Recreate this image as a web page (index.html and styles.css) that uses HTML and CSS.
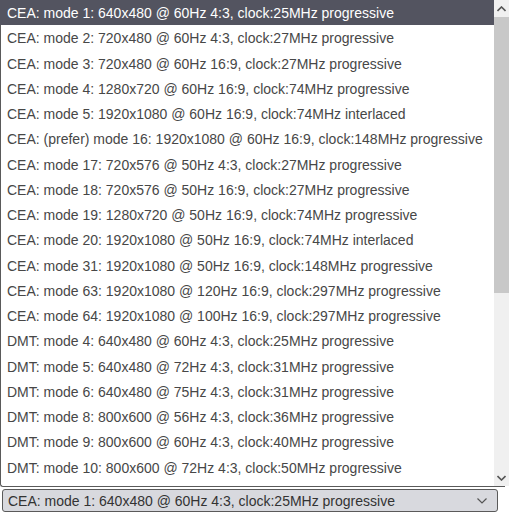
FILE: index.html
```html
<!DOCTYPE html>
<html>
<head>
<meta charset="utf-8">
<link rel="stylesheet" href="styles.css">
</head>
<body>
<div class="page">
  <div class="popup">
    <div class="options">
      <div class="opt selected">CEA: mode 1: 640x480 @ 60Hz 4:3, clock:25MHz progressive</div>
      <div class="opt">CEA: mode 2: 720x480 @ 60Hz 4:3, clock:27MHz progressive</div>
      <div class="opt">CEA: mode 3: 720x480 @ 60Hz 16:9, clock:27MHz progressive</div>
      <div class="opt">CEA: mode 4: 1280x720 @ 60Hz 16:9, clock:74MHz progressive</div>
      <div class="opt">CEA: mode 5: 1920x1080 @ 60Hz 16:9, clock:74MHz interlaced</div>
      <div class="opt">CEA: (prefer) mode 16: 1920x1080 @ 60Hz 16:9, clock:148MHz progressive</div>
      <div class="opt">CEA: mode 17: 720x576 @ 50Hz 4:3, clock:27MHz progressive</div>
      <div class="opt">CEA: mode 18: 720x576 @ 50Hz 16:9, clock:27MHz progressive</div>
      <div class="opt">CEA: mode 19: 1280x720 @ 50Hz 16:9, clock:74MHz progressive</div>
      <div class="opt">CEA: mode 20: 1920x1080 @ 50Hz 16:9, clock:74MHz interlaced</div>
      <div class="opt">CEA: mode 31: 1920x1080 @ 50Hz 16:9, clock:148MHz progressive</div>
      <div class="opt">CEA: mode 63: 1920x1080 @ 120Hz 16:9, clock:297MHz progressive</div>
      <div class="opt">CEA: mode 64: 1920x1080 @ 100Hz 16:9, clock:297MHz progressive</div>
      <div class="opt">DMT: mode 4: 640x480 @ 60Hz 4:3, clock:25MHz progressive</div>
      <div class="opt">DMT: mode 5: 640x480 @ 72Hz 4:3, clock:31MHz progressive</div>
      <div class="opt">DMT: mode 6: 640x480 @ 75Hz 4:3, clock:31MHz progressive</div>
      <div class="opt">DMT: mode 8: 800x600 @ 56Hz 4:3, clock:36MHz progressive</div>
      <div class="opt">DMT: mode 9: 800x600 @ 60Hz 4:3, clock:40MHz progressive</div>
      <div class="opt">DMT: mode 10: 800x600 @ 72Hz 4:3, clock:50MHz progressive</div>
    </div>
    <div class="scrollbar">
      <div class="sb-btn">
        <svg width="9" height="6" viewBox="0 0 9 6"><path d="M0.5 5 L4.5 1 L8.5 5" fill="none" stroke="#555" stroke-width="1.6"/></svg>
      </div>
      <div class="sb-thumb"></div>
      <div class="sb-track"></div>
      <div class="sb-btn">
        <svg width="9" height="6" viewBox="0 0 9 6"><path d="M0.5 1 L4.5 5 L8.5 1" fill="none" stroke="#555" stroke-width="1.6"/></svg>
      </div>
    </div>
  </div>
  <div class="select">
    <span class="select-text">CEA: mode 1: 640x480 @ 60Hz 4:3, clock:25MHz progressive</span>
    <svg class="chev" width="10" height="6" viewBox="0 0 10 6"><path d="M0.5 0.5 L5 5 L9.5 0.5" fill="none" stroke="#555" stroke-width="1.2"/></svg>
  </div>
</div>
</body>
</html>
```
FILE: styles.css
```css
html, body {
  margin: 0;
  padding: 0;
  background: #ffffff;
}
.page {
  width: 509px;
  height: 512px;
  overflow: hidden;
  font-family: "Liberation Sans", Arial, sans-serif;
  font-size: 14px;
}
.popup {
  display: flex;
  height: 487px;
  width: 505px;
  border-left: 1px solid #5a5a5a;
  border-bottom: 1px solid #5a5a5a;
  border-bottom-left-radius: 3px;
  box-sizing: border-box;
}
.options {
  flex: 1;
  display: flex;
  flex-direction: column;
}
.opt {
  height: 25.25px;
  line-height: 26px;
  padding-left: 6px;
  color: #474747;
  white-space: nowrap;
  overflow: hidden;
}
.opt.selected {
  background: #535460;
  color: #ffffff;
  margin-left: -1px;
  padding-left: 7px;
}
.scrollbar {
  width: 15px;
  margin-right: -4px;
  display: flex;
  flex-direction: column;
  background: #f0f0f0;
}
.sb-btn {
  height: 17px;
  display: flex;
  align-items: center;
  justify-content: center;
  background: #f0f0f0;
}
.sb-thumb {
  height: 276px;
  background: #c8c8c8;
}
.sb-track {
  flex: 1;
}
.select {
  margin: 2px 0 0 2px;
  width: 496px;
  height: 23px;
  box-sizing: border-box;
  border: 1px solid #5a5a5a;
  border-radius: 3px;
  background: #d8d9de;
  display: flex;
  align-items: center;
  padding: 0 10px 0 5px;
  color: #333333;
}
.select-text {
  flex: 1;
  white-space: nowrap;
}
.chev {
  display: block;
}
```
